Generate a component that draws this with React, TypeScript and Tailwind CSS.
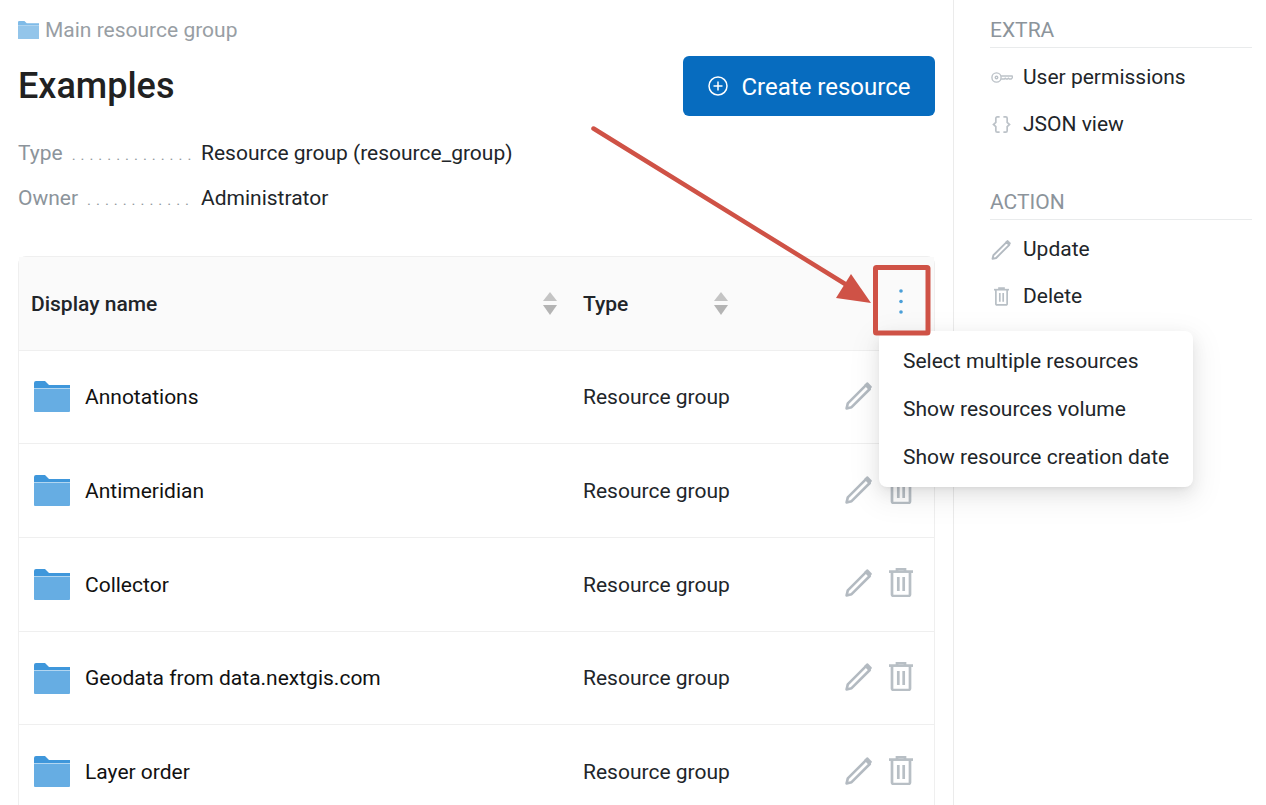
import React from "react";

const Folder = ({ className, light }: { className: string; light?: boolean }) => (
  <svg viewBox="0 0 36 31" className={className} preserveAspectRatio="none">
    <path d="M0 2a2 2 0 0 1 2-2h9l4 4h21v3H0z" fill={light ? "#7fbbe8" : "#3f97db"} />
    <path d="M0 7.5h36V30a1 1 0 0 1-1 1H1a1 1 0 0 1-1-1z" fill={light ? "#93c5ea" : "#66ade3"} />
  </svg>
);

const Pencil = ({ className }: { className: string }) => (
  <svg viewBox="0 0 28 29" className={className} fill="none">
    <path d="M1.6 27.4l1.2-5L21 4.2l3.8 3.8L6.6 26.2z" stroke="#b3bac1" strokeWidth="2.6" strokeLinejoin="round" />
    <path d="M21.6 1.6a1 1 0 0 1 1.4 0l3.6 3.6a1 1 0 0 1 0 1.4l-2.4 2.4-5-5z" fill="#b3bac1" />
  </svg>
);

const Trash = ({ className }: { className: string }) => (
  <svg viewBox="0 0 24 29" className={className} fill="none" stroke="#b8bfc5" strokeWidth="2.7">
    <path d="M0 3.6h24" />
    <path d="M8 3V1h8v2" />
    <path d="M3 4v22.5a1.5 1.5 0 0 0 1.5 1.5h15a1.5 1.5 0 0 0 1.5-1.5V4" />
    <path d="M9.3 9v14M14.7 9v14" />
  </svg>
);

const Sort = () => (
  <svg viewBox="0 0 14 23" className="w-[14px] h-[23px]">
    <path d="M7 0l7 9H0z" fill="#c4c4c4" />
    <path d="M7 23L0 13h14z" fill="#b4b4b4" />
  </svg>
);

const Key = () => (
  <svg viewBox="0 0 24 12" className="ml-[1px] w-[22px] h-[11px]" fill="none" stroke="#bcc2c8" strokeWidth="1.5">
    <circle cx="6" cy="6" r="5" />
    <circle cx="6" cy="6" r="1.4" />
    <path d="M11 4.3h12l0.6 1.7-1.6 1.7h-2l-1-1-1 1h-1.5l-1-1-1 1H11" />
  </svg>
);

const Braces = () => (
  <svg viewBox="0 0 22 18" className="w-[23px] h-[17px]" fill="none" stroke="#bcc2c8" strokeWidth="1.8">
    <path d="M9 1H6.5A1.5 1.5 0 0 0 5 2.5v4.2L2.5 9 5 11.3v4.2A1.5 1.5 0 0 0 6.5 17H9" />
    <path d="M13 1h2.5A1.5 1.5 0 0 1 17 2.5v4.2L19.5 9 17 11.3v4.2a1.5 1.5 0 0 1-1.5 1.5H13" />
  </svg>
);

const rows = ["Annotations", "Antimeridian", "Collector", "Geodata from data.nextgis.com", "Layer order"];

const MetaRow = ({ label, value, dots }: { label: string; value: string; dots: number }) => (
  <div className="flex h-[45px] items-center">
    <div className="w-[183px] flex items-baseline text-[#8c949b] whitespace-nowrap">
      <span>{label}</span>
      <span className="ml-[9px] text-[#8f979d] text-[15px] tracking-[4.95px]">{".".repeat(dots)}</span>
    </div>
    <span>{value}</span>
  </div>
);

const SideItem = ({ icon, label }: { icon: React.ReactNode; label: string }) => (
  <div className="flex h-[47px] items-center">
    <span className="w-[33px] flex items-center">{icon}</span>
    <span>{label}</span>
  </div>
);

const SideHead = ({ children }: { children: string }) => (
  <div className="h-[33px] flex items-center border-b border-[#e9ebec] text-[#8c949b] mb-[6px]">{children}</div>
);

export default function App() {
  return (
    <div
      className="relative flex h-[805px] w-[1266px] overflow-hidden bg-white text-[21px] text-[#212529]"
      style={{ fontFamily: "Roboto, sans-serif" }}
    >
      <main className="w-[954px] shrink-0 border-r border-[#ebebeb] pl-[18px] pr-[18px]">
        <div className="flex h-[56px] items-start pt-[18px]">
          <div className="flex items-center gap-[6px] text-[#989ea4] leading-[24px]">
            <Folder className="w-[21px] h-[18px]" light />
            <span>Main resource group</span>
          </div>
        </div>
        <div className="flex h-[60px] items-center justify-between">
          <h1 className="text-[36px] font-medium text-[#212121]">Examples</h1>
          <button className="flex h-[60px] w-[252px] items-center justify-center gap-[14px] rounded-[6px] bg-[#076cbf] text-[24px] text-white">
            <svg viewBox="0 0 20 20" className="w-[20px] h-[20px]" fill="none" stroke="white" strokeWidth="1.5">
              <circle cx="10" cy="10" r="9" />
              <path d="M10 5.5v9M5.5 10h9" />
            </svg>
            <span className="mt-[1px]">Create resource</span>
          </button>
        </div>
        <div className="mt-[15px]">
          <MetaRow label="Type" value="Resource group (resource_group)" dots={14} />
          <MetaRow label="Owner" value="Administrator" dots={12} />
        </div>
        <div className="mt-[35px] rounded-t-[8px] border border-[#efefef]">
          <div className="flex h-[93.6px] items-center border-b border-[#efefef] bg-[#fafafa] font-medium">
            <div className="flex w-[538px] items-center justify-between pl-[12px]">
              <span className="mt-[3px]">Display name</span>
              <Sort />
            </div>
            <div className="flex w-[171px] items-center justify-between pl-[26px]">
              <span className="mt-[3px]">Type</span>
              <Sort />
            </div>
          </div>
          {rows.map((name) => (
            <div key={name} className="flex h-[93.7px] items-center border-b border-[#efefef]">
              <div className="flex w-[538px] items-center pl-[15px] gap-[15px]">
                <Folder className="w-[36px] h-[31px]" />
                <span className="mt-[2px] text-[#111]">{name}</span>
              </div>
              <div className="w-[288px] pl-[26px] mt-[2px]">Resource group</div>
              <div className="flex gap-[16px] -mt-[3px]">
                <Pencil className="w-[28px] h-[29px]" />
                <Trash className="w-[24px] h-[29px]" />
              </div>
            </div>
          ))}
        </div>
      </main>
      <aside className="flex-1 pl-[36px] pr-[14px] pt-[15px]">
        <SideHead>EXTRA</SideHead>
        <SideItem icon={<Key />} label="User permissions" />
        <SideItem icon={<Braces />} label="JSON view" />
        <div className="h-[39px]" />
        <SideHead>ACTION</SideHead>
        <SideItem icon={<span className="pl-[1px] flex"><Pencil className="w-[21px] h-[21px]" /></span>} label="Update" />
        <SideItem icon={<span className="pl-[4px] flex"><Trash className="w-[15px] h-[19px]" /></span>} label="Delete" />
      </aside>

      <div className="absolute left-[879px] top-[331px] w-[314px] rounded-[8px] bg-white pt-[7px] pb-[5px] shadow-[0_6px_16px_rgba(0,0,0,0.08),0_3px_6px_-4px_rgba(0,0,0,0.12),0_9px_28px_8px_rgba(0,0,0,0.05)]">
        {["Select multiple resources", "Show resources volume", "Show resource creation date"].map((t) => (
          <div key={t} className="flex h-[48px] items-center pl-[24px] whitespace-nowrap">{t}</div>
        ))}
      </div>

      <svg className="absolute left-0 top-0 w-[1266px] h-[805px] pointer-events-none" viewBox="0 0 1266 805" fill="none">
        <path d="M593.5 128.5L850 287" stroke="#cf5246" strokeWidth="4.5" strokeLinecap="round" />
        <path d="M871 303L851 274L836 298z" fill="#cf5246" />
        <rect x="875.5" y="267.5" width="52.5" height="65.5" rx="1" stroke="#cf5246" strokeWidth="5" />
        <circle cx="901" cy="291" r="1.8" fill="#4a9fd8" />
        <circle cx="901" cy="301.5" r="1.8" fill="#4a9fd8" />
        <circle cx="901" cy="312" r="1.8" fill="#4a9fd8" />
      </svg>
    </div>
  );
}
